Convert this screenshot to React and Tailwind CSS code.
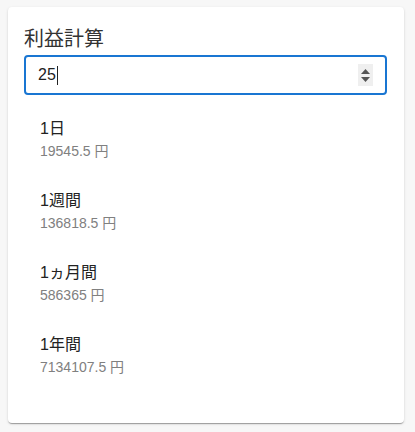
import React from 'react';

const rows = [
    { label: '1日', value: '19545.5 円' },
    { label: '1週間', value: '136818.5 円' },
    { label: '1ヵ月間', value: '586365 円' },
    { label: '1年間', value: '7134107.5 円' },
];

const font = { fontFamily: '"Liberation Sans", "Noto Sans CJK JP", sans-serif' };

export default function App() {
    return (
        <div className="min-h-[432px] bg-[#f7f7f7] pt-[7px] pl-2" style={font}>
            <div className="w-[396px] bg-white rounded-[4px] shadow-[0_2px_1px_-1px_rgba(0,0,0,0.2),0_1px_1px_0_rgba(0,0,0,0.14),0_1px_3px_0_rgba(0,0,0,0.12)] px-4 pt-4 pb-6">
                <h2 className="text-[20px] leading-[32px] text-[#333] font-normal">利益計算</h2>
                <div className="h-10 w-[363px] border-2 border-[#1976d2] rounded-[4px] flex items-center pl-3 pr-3">
                    <span className="text-[16px] text-[#222]">25</span>
                    <span className="w-px h-[19px] bg-[#222] ml-[1px]"></span>
                    <div className="ml-auto w-[15px] h-[22px] bg-[#efefef] flex flex-col items-center justify-center gap-[3px]">
                        <svg width="9" height="5" viewBox="0 0 9 5">
                            <path d="M4.5 0 L9 5 L0 5 Z" fill="#555" />
                        </svg>
                        <svg width="9" height="5" viewBox="0 0 9 5">
                            <path d="M0 0 L9 0 L4.5 5 Z" fill="#555" />
                        </svg>
                    </div>
                </div>
                <ul className="py-2">
                    {rows.map((row) => (
                        <li key={row.label} className="px-4 py-2">
                            <div className="my-[6px]">
                                <div className="text-[16px] leading-6 text-[#222]">{row.label}</div>
                                <div className="text-[14px] leading-5 text-[#808080]">{row.value}</div>
                            </div>
                        </li>
                    ))}
                </ul>
            </div>
        </div>
    );
}
